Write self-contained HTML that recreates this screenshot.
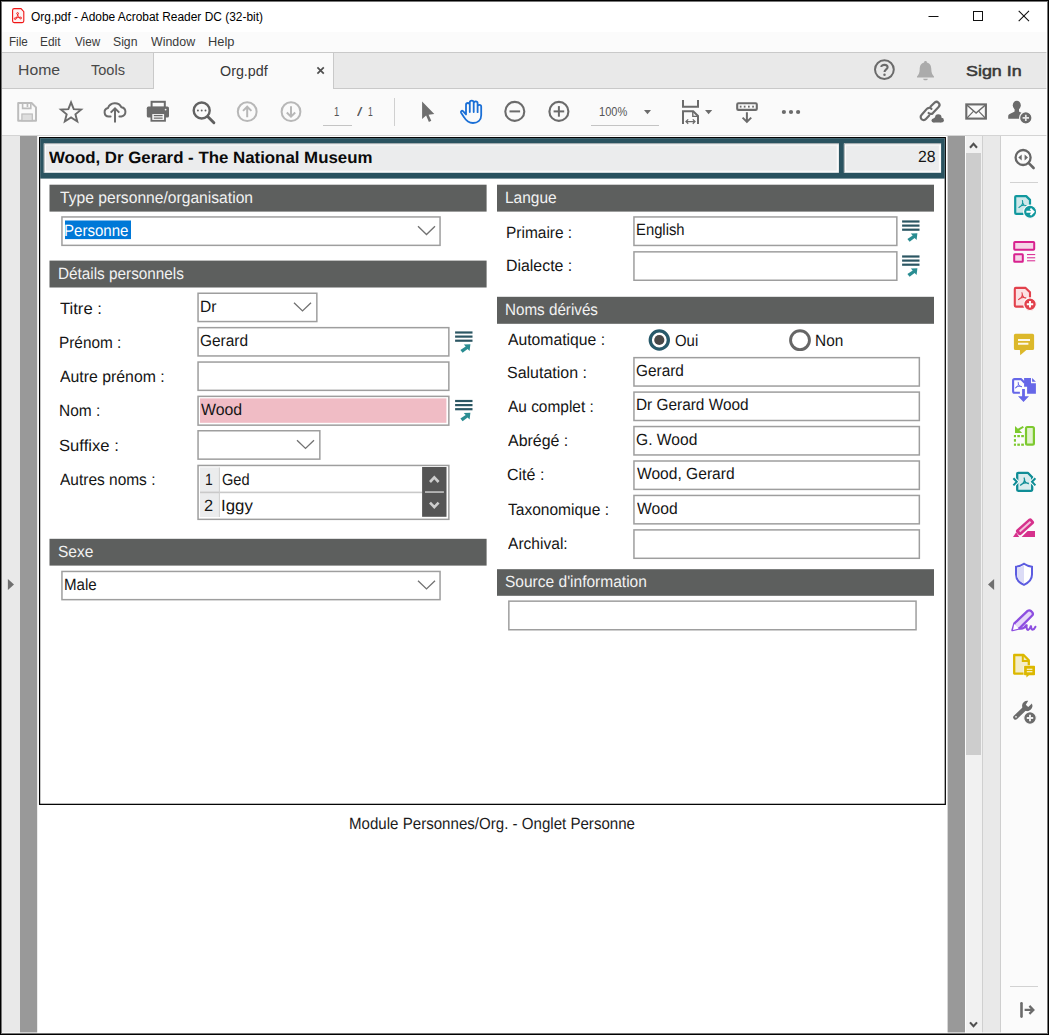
<!DOCTYPE html>
<html><head><meta charset="utf-8"><title>Org.pdf - Adobe Acrobat Reader DC (32-bit)</title>
<style>
html,body{margin:0;padding:0;background:#fff;}
body{width:1049px;height:1035px;overflow:hidden;font-family:"Liberation Sans",sans-serif;}
#win{position:relative;width:1049px;height:1035px;overflow:hidden;background:#fff;}
#win>div{position:absolute;box-sizing:border-box;}
#win>svg{position:absolute;left:0;top:0;}
.gp{text-rendering:geometricPrecision;}
.sb{-webkit-text-stroke:0.55px #3a3a3a;}
.t{position:absolute;white-space:pre;line-height:1;transform-origin:0 0;font-family:"Liberation Sans",sans-serif;}
</style></head><body><div id="win">
<div style="left:0px;top:0px;width:1049px;height:1035px;background:#000"></div>
<div style="left:1px;top:1px;width:1047px;height:1033px;background:#767676"></div>
<div style="left:2px;top:2px;width:1045px;height:1031px;background:#fff"></div>
<div style="left:2px;top:2px;width:1045px;height:30px;background:#fff"></div>
<div style="left:2px;top:32px;width:1045px;height:20px;background:#fbfbfb"></div>
<div style="left:2px;top:52px;width:1045px;height:37px;background:#e9e9e9;border-top:1px solid #c9c9c9;border-bottom:1px solid #c9c9c9"></div>
<div style="left:153px;top:53px;width:181px;height:36px;background:#fafafa;border-left:1px solid #c9c9c9;border-right:1px solid #c9c9c9"></div>
<div style="left:2px;top:89px;width:1045px;height:46px;background:#fafafa"></div>
<div style="left:2px;top:135px;width:1045px;height:1px;background:#d4d4d4"></div>
<div style="left:2px;top:136px;width:1045px;height:897px;background:#999"></div>
<div style="left:2px;top:136px;width:18px;height:897px;background:#e9e9e9"></div>
<div style="left:965px;top:136px;width:17px;height:897px;background:#f1f1f1"></div>
<div style="left:965px;top:136px;width:1px;height:897px;background:#fcfcfc"></div>
<div style="left:966px;top:153px;width:15px;height:602px;background:#cdcdcd"></div>
<div style="left:982px;top:136px;width:1px;height:897px;background:#d0d0d0"></div>
<div style="left:983px;top:136px;width:17px;height:897px;background:#e9e9e9"></div>
<div style="left:1000px;top:136px;width:1px;height:897px;background:#cfcfcf"></div>
<div style="left:1001px;top:136px;width:46px;height:897px;background:#fbfbfb"></div>
<div style="left:1010px;top:182px;width:28px;height:1px;background:#d2d2d2"></div>
<div style="left:1010px;top:986px;width:28px;height:1px;background:#d2d2d2"></div>
<div style="left:394px;top:98px;width:1px;height:28px;background:#d0d0d0"></div>
<div style="left:323px;top:125px;width:29px;height:1px;background:#c4c4c4"></div>
<div style="left:591px;top:125px;width:68px;height:1px;background:#c4c4c4"></div>
<svg width="1049" height="1035" viewBox="0 0 1049 1035"><rect x="37.2" y="136" width="910.4" height="897" fill="#fff"/><rect x="39.6" y="137.65" width="905.7" height="666.7" fill="#fff" stroke="#000" stroke-width="1.25"/><rect x="40.2" y="138.2" width="904.5" height="40.4" fill="#2a5360"/><rect x="44.9" y="144.4" width="792.9" height="27.3" fill="#ebeced" stroke="#fbfbfb" stroke-width="2.2"/><rect x="845" y="144.4" width="95" height="27.3" fill="#ebeced" stroke="#fbfbfb" stroke-width="2.2"/><path d="M44.2 172.8 V143.7 H838.9 M844.3 172.8 V143.7 H941.1" fill="none" stroke="#9aa3a5" stroke-width="0.9"/><rect x="49.5" y="184.7" width="437.10" height="26.90" fill="#5d5f5e"/><rect x="49.5" y="260.6" width="437.10" height="26.90" fill="#5d5f5e"/><rect x="49.5" y="538.8" width="437.10" height="26.80" fill="#5d5f5e"/><rect x="497" y="184.7" width="437.00" height="26.90" fill="#5d5f5e"/><rect x="497" y="296.8" width="437.00" height="27.00" fill="#5d5f5e"/><rect x="497" y="569.2" width="437.00" height="26.60" fill="#5d5f5e"/><rect x="61.95" y="216.95" width="378.10" height="28.40" fill="#fff" stroke="#9e9e9e" stroke-width="1.5"/><rect x="65" y="220.5" width="66" height="18.6" fill="#0078d7"/><path d="M418.0 226.3 L426.5 234.5 L435.0 226.3" fill="none" stroke="#727272" stroke-width="1.35"/><rect x="198.05" y="293.25" width="118.80" height="28.30" fill="#fff" stroke="#9e9e9e" stroke-width="1.5"/><path d="M294.0 302.7 L302.5 310.9 L311.0 302.7" fill="none" stroke="#727272" stroke-width="1.35"/><rect x="198.05" y="327.65" width="250.80" height="28.30" fill="#fff" stroke="#9e9e9e" stroke-width="1.5"/><rect x="198.05" y="362.05" width="250.80" height="28.30" fill="#fff" stroke="#9e9e9e" stroke-width="1.5"/><rect x="198.05" y="396.35" width="250.80" height="28.80" fill="#fff" stroke="#9e9e9e" stroke-width="1.5"/><rect x="200" y="398.4" width="246.4" height="24.4" fill="#f0bcc5"/><rect x="198.05" y="430.75" width="121.80" height="28.40" fill="#fff" stroke="#9e9e9e" stroke-width="1.5"/><path d="M297.0 440.2 L305.5 448.4 L314.0 440.2" fill="none" stroke="#727272" stroke-width="1.35"/><rect x="198.05" y="465.45" width="250.80" height="53.90" fill="#fff" stroke="#9e9e9e" stroke-width="1.5"/><rect x="200" y="467.4" width="19" height="49.6" fill="#ebeced"/><rect x="200" y="491.6" width="222.2" height="1.6" fill="#c9c9c9"/><rect x="218.9" y="467.4" width="1" height="49.6" fill="#cfcfcf"/><rect x="422.1" y="467" width="24.4" height="49.8" fill="#555"/><rect x="425" y="491.2" width="18.9" height="1.7" fill="#bdbdbd"/><path d="M430 482 L434.3 477.4 L438.6 482" fill="none" stroke="#cdcdcd" stroke-width="2.6"/><path d="M430 502.6 L434.3 507.2 L438.6 502.6" fill="none" stroke="#cdcdcd" stroke-width="2.6"/><rect x="61.95" y="571.45" width="378.10" height="28.20" fill="#fff" stroke="#9e9e9e" stroke-width="1.5"/><path d="M418.0 580.7 L426.5 588.9 L435.0 580.7" fill="none" stroke="#727272" stroke-width="1.35"/><g fill="#2b5663"><rect x="455.1" y="331.40" width="17.4" height="2.2"/><rect x="455.1" y="335.50" width="17.4" height="2.2"/><rect x="455.1" y="339.60" width="17.4" height="2.2"/></g><path d="M470.4 344.2 l-6.6 0.4 l1.9 2 l-5.3 3.3 l2.2 2.9 l5 -3.8 l2 2.1z" fill="#2a8d92"/><g fill="#2b5663"><rect x="455.1" y="399.90" width="17.4" height="2.2"/><rect x="455.1" y="404.00" width="17.4" height="2.2"/><rect x="455.1" y="408.10" width="17.4" height="2.2"/></g><path d="M470.4 412.7 l-6.6 0.4 l1.9 2 l-5.3 3.3 l2.2 2.9 l5 -3.8 l2 2.1z" fill="#2a8d92"/><rect x="633.95" y="216.95" width="262.90" height="28.50" fill="#fff" stroke="#9e9e9e" stroke-width="1.5"/><rect x="633.95" y="251.85" width="262.90" height="28.40" fill="#fff" stroke="#9e9e9e" stroke-width="1.5"/><g fill="#2b5663"><rect x="902.1" y="220.40" width="17.4" height="2.2"/><rect x="902.1" y="224.50" width="17.4" height="2.2"/><rect x="902.1" y="228.60" width="17.4" height="2.2"/></g><path d="M917.4 233.2 l-6.6 0.4 l1.9 2 l-5.3 3.3 l2.2 2.9 l5 -3.8 l2 2.1z" fill="#2a8d92"/><g fill="#2b5663"><rect x="902.1" y="255.40" width="17.4" height="2.2"/><rect x="902.1" y="259.50" width="17.4" height="2.2"/><rect x="902.1" y="263.60" width="17.4" height="2.2"/></g><path d="M917.4 268.2 l-6.6 0.4 l1.9 2 l-5.3 3.3 l2.2 2.9 l5 -3.8 l2 2.1z" fill="#2a8d92"/><rect x="633.95" y="357.65" width="285.40" height="28.40" fill="#fff" stroke="#9e9e9e" stroke-width="1.5"/><rect x="633.95" y="392.10" width="285.40" height="28.40" fill="#fff" stroke="#9e9e9e" stroke-width="1.5"/><rect x="633.95" y="426.55" width="285.40" height="28.40" fill="#fff" stroke="#9e9e9e" stroke-width="1.5"/><rect x="633.95" y="461.00" width="285.40" height="28.40" fill="#fff" stroke="#9e9e9e" stroke-width="1.5"/><rect x="633.95" y="495.45" width="285.40" height="28.40" fill="#fff" stroke="#9e9e9e" stroke-width="1.5"/><rect x="633.95" y="529.90" width="285.40" height="28.40" fill="#fff" stroke="#9e9e9e" stroke-width="1.5"/><rect x="508.85" y="601.15" width="407.20" height="28.60" fill="#fff" stroke="#9e9e9e" stroke-width="1.5"/><circle cx="659.3" cy="340" r="9.05" fill="#fff" stroke="#27596a" stroke-width="3.3"/><circle cx="659.3" cy="340" r="5.1" fill="#484848"/><circle cx="800" cy="340.2" r="9.45" fill="#fff" stroke="#666" stroke-width="2.9"/></svg>
<span class="t " style="left:30.79px;top:11.00px;font-size:12.3px;color:#000;font-weight:400;transform:scaleX(0.9696)">Org.pdf - Adobe Acrobat Reader DC (32-bit)</span>
<span class="t " style="left:8.55px;top:36.00px;font-size:12.3px;color:#3a3a3a;font-weight:400;transform:scaleX(0.9477)">File</span>
<span class="t " style="left:40.04px;top:36.00px;font-size:12.3px;color:#3a3a3a;font-weight:400;transform:scaleX(0.9639)">Edit</span>
<span class="t " style="left:74.87px;top:36.00px;font-size:12.3px;color:#3a3a3a;font-weight:400;transform:scaleX(0.9488)">View</span>
<span class="t " style="left:113.23px;top:36.00px;font-size:12.3px;color:#3a3a3a;font-weight:400;transform:scaleX(0.9924)">Sign</span>
<span class="t " style="left:150.89px;top:36.00px;font-size:12.3px;color:#3a3a3a;font-weight:400;transform:scaleX(1.0079)">Window</span>
<span class="t " style="left:207.96px;top:36.00px;font-size:12.3px;color:#3a3a3a;font-weight:400;transform:scaleX(1.0425)">Help</span>
<span class="t " style="left:17.63px;top:62.00px;font-size:15.4px;color:#484848;font-weight:400;transform:scaleX(1.0247)">Home</span>
<span class="t " style="left:90.69px;top:62.00px;font-size:15.4px;color:#484848;font-weight:400;transform:scaleX(0.9450)">Tools</span>
<span class="t " style="left:219.86px;top:64.00px;font-size:14.2px;color:#383838;font-weight:400;transform:scaleX(1.0088)">Org.pdf</span>
<span class="t sb" style="left:965.91px;top:63.00px;font-size:15.2px;color:#3a3a3a;font-weight:400;transform:scaleX(1.1784)">Sign In</span>
<span class="t " style="left:334.11px;top:106.00px;font-size:12px;color:#555;font-weight:400;transform:scaleX(0.7902)">1</span>
<span class="t " style="left:356.51px;top:106.00px;font-size:12px;color:#555;font-weight:400;transform:scaleX(1.6159)">/</span>
<span class="t " style="left:368.29px;top:106.00px;font-size:12px;color:#555;font-weight:400;transform:scaleX(0.7150)">1</span>
<span class="t " style="left:598.88px;top:106.00px;font-size:12px;color:#555;font-weight:400;transform:scaleX(0.9184)">100%</span>
<span class="t gp" style="left:48.61px;top:150.00px;font-size:16.4px;color:#0a0a0a;font-weight:700;transform:scaleX(1.0274)">Wood, Dr Gerard - The National Museum</span>
<span class="t gp" style="left:917.51px;top:149.00px;font-size:16.2px;color:#151515;font-weight:400;transform:scaleX(0.9728)">28</span>
<span class="t gp" style="left:59.76px;top:190.00px;font-size:16.2px;color:#f2f2f2;font-weight:400;transform:scaleX(0.9662)">Type personne/organisation</span>
<span class="t gp" style="left:57.65px;top:266.00px;font-size:16.2px;color:#f2f2f2;font-weight:400;transform:scaleX(0.9451)">Détails personnels</span>
<span class="t gp" style="left:58.04px;top:544.00px;font-size:16.2px;color:#f2f2f2;font-weight:400;transform:scaleX(0.9588)">Sexe</span>
<span class="t gp" style="left:505.14px;top:190.00px;font-size:16.2px;color:#f2f2f2;font-weight:400;transform:scaleX(0.9570)">Langue</span>
<span class="t gp" style="left:505.16px;top:302.00px;font-size:16.2px;color:#f2f2f2;font-weight:400;transform:scaleX(0.9392)">Noms dérivés</span>
<span class="t gp" style="left:505.34px;top:574.00px;font-size:16.2px;color:#f2f2f2;font-weight:400;transform:scaleX(0.9589)">Source d&#x27;information</span>
<span class="t gp" style="left:64.37px;top:223.00px;font-size:16.2px;color:#fff;font-weight:400;transform:scaleX(0.9298)">Personne</span>
<span class="t gp" style="left:60.25px;top:301.00px;font-size:16.2px;color:#151515;font-weight:400;transform:scaleX(1.0275)">Titre :</span>
<span class="t gp" style="left:59.35px;top:335.00px;font-size:16.2px;color:#151515;font-weight:400;transform:scaleX(0.9486)">Prénom :</span>
<span class="t gp" style="left:60.37px;top:369.00px;font-size:16.2px;color:#151515;font-weight:400;transform:scaleX(0.9778)">Autre prénom :</span>
<span class="t gp" style="left:59.34px;top:403.00px;font-size:16.2px;color:#151515;font-weight:400;transform:scaleX(0.9562)">Nom :</span>
<span class="t gp" style="left:59.47px;top:438.00px;font-size:16.2px;color:#151515;font-weight:400;transform:scaleX(1.0268)">Suffixe :</span>
<span class="t gp" style="left:60.38px;top:472.00px;font-size:16.2px;color:#151515;font-weight:400;transform:scaleX(0.9559)">Autres noms :</span>
<span class="t gp" style="left:199.93px;top:299.00px;font-size:16.2px;color:#151515;font-weight:400;transform:scaleX(0.9628)">Dr</span>
<span class="t gp" style="left:200.30px;top:333.00px;font-size:16.2px;color:#151515;font-weight:400;transform:scaleX(0.9549)">Gerard</span>
<span class="t gp" style="left:200.82px;top:402.00px;font-size:16.2px;color:#151515;font-weight:400;transform:scaleX(0.9799)">Wood</span>
<span class="t gp" style="left:204.75px;top:472.00px;font-size:16.2px;color:#151515;font-weight:400;transform:scaleX(0.8607)">1</span>
<span class="t gp" style="left:222.24px;top:472.00px;font-size:16.2px;color:#151515;font-weight:400;transform:scaleX(0.9030)">Ged</span>
<span class="t gp" style="left:204.09px;top:498.00px;font-size:16.2px;color:#151515;font-weight:400;transform:scaleX(1.0123)">2</span>
<span class="t gp" style="left:221.45px;top:498.00px;font-size:16.2px;color:#151515;font-weight:400;transform:scaleX(1.0388)">Iggy</span>
<span class="t gp" style="left:63.57px;top:577.00px;font-size:16.2px;color:#151515;font-weight:400;transform:scaleX(0.9325)">Male</span>
<span class="t gp" style="left:506.34px;top:225.00px;font-size:16.2px;color:#151515;font-weight:400;transform:scaleX(0.9553)">Primaire :</span>
<span class="t gp" style="left:506.31px;top:258.00px;font-size:16.2px;color:#151515;font-weight:400;transform:scaleX(0.9814)">Dialecte :</span>
<span class="t gp" style="left:635.69px;top:222.00px;font-size:16.2px;color:#151515;font-weight:400;transform:scaleX(0.9156)">English</span>
<span class="t gp" style="left:507.87px;top:332.00px;font-size:16.2px;color:#151515;font-weight:400;transform:scaleX(0.9712)">Automatique :</span>
<span class="t gp" style="left:507.01px;top:365.00px;font-size:16.2px;color:#151515;font-weight:400;transform:scaleX(0.9876)">Salutation :</span>
<span class="t gp" style="left:507.88px;top:399.00px;font-size:16.2px;color:#151515;font-weight:400;transform:scaleX(0.9532)">Au complet :</span>
<span class="t gp" style="left:507.87px;top:433.00px;font-size:16.2px;color:#151515;font-weight:400;transform:scaleX(0.9855)">Abrégé :</span>
<span class="t gp" style="left:507.26px;top:467.00px;font-size:16.2px;color:#151515;font-weight:400;transform:scaleX(0.9882)">Cité :</span>
<span class="t gp" style="left:507.77px;top:502.00px;font-size:16.2px;color:#151515;font-weight:400;transform:scaleX(0.9590)">Taxonomique :</span>
<span class="t gp" style="left:507.88px;top:536.00px;font-size:16.2px;color:#151515;font-weight:400;transform:scaleX(0.9613)">Archival:</span>
<span class="t gp" style="left:675.35px;top:333.00px;font-size:16.2px;color:#151515;font-weight:400;transform:scaleX(0.9229)">Oui</span>
<span class="t gp" style="left:814.84px;top:333.00px;font-size:16.2px;color:#151515;font-weight:400;transform:scaleX(0.9517)">Non</span>
<span class="t gp" style="left:636.10px;top:363.00px;font-size:16.2px;color:#151515;font-weight:400;transform:scaleX(0.9508)">Gerard</span>
<span class="t gp" style="left:635.64px;top:397.00px;font-size:16.2px;color:#151515;font-weight:400;transform:scaleX(0.9508)">Dr Gerard Wood</span>
<span class="t gp" style="left:636.09px;top:432.00px;font-size:16.2px;color:#151515;font-weight:400;transform:scaleX(0.9644)">G. Wood</span>
<span class="t gp" style="left:636.63px;top:466.00px;font-size:16.2px;color:#151515;font-weight:400;transform:scaleX(0.9631)">Wood, Gerard</span>
<span class="t gp" style="left:636.63px;top:501.00px;font-size:16.2px;color:#151515;font-weight:400;transform:scaleX(0.9677)">Wood</span>
<span class="t gp" style="left:349.17px;top:816.00px;font-size:16.2px;color:#1c1c1c;font-weight:400;transform:scaleX(0.9321)">Module Personnes/Org. - Onglet Personne</span>
<svg width="1049" height="1035" viewBox="0 0 1049 1035"><path d="M14.2 8.6 H21 L23.8 11.6 V21 Q23.8 22.6 22.2 22.6 H14.2 Q12.6 22.6 12.6 21 V10.2 Q12.6 8.6 14.2 8.6Z" fill="#fdf3f3" stroke="#f01414" stroke-width="1.1"/><g fill="none" stroke="#f01414" stroke-width="0.9"><circle cx="17.6" cy="13.5" r="0.9"/><circle cx="15.2" cy="18.6" r="0.9"/><circle cx="20.6" cy="18" r="0.9"/><path d="M17.6 14.4 C17.6 16.5 16.5 17.8 15.8 18.1 M17.7 14.4 C18 16 19 17.3 19.9 17.6 M16 18.3 C17.5 17.3 18.6 17.3 19.8 17.8"/></g><path d="M928.5 16.5 H938.5" stroke="#111" stroke-width="1"/><rect x="973.5" y="11.5" width="9" height="9" fill="none" stroke="#111" stroke-width="1"/><path d="M1018.7 10.9 L1029 21.2 M1029 10.9 L1018.7 21.2" stroke="#111" stroke-width="1.1"/><path d="M317.4 67.3 L323.8 73.7 M323.8 67.3 L317.4 73.7" stroke="#4f4f4f" stroke-width="1.7"/><circle cx="884.4" cy="69.6" r="9.4" fill="none" stroke="#6b6b6b" stroke-width="2"/><path d="M881.3 66.9 C881.3 64.2 887.6 64.2 887.6 67.2 C887.6 69.3 884.5 69.4 884.5 71.9" fill="none" stroke="#6b6b6b" stroke-width="2.1"/><circle cx="884.5" cy="74.7" r="1.25" fill="#6b6b6b"/><path d="M925.5 60.9 C926.6 60.9 926.9 61.6 926.9 62.4 C930.3 63.3 931.3 66.2 931.3 69.3 C931.3 73 932.6 75 934 76.6 V77.6 H917 V76.6 C918.4 75 919.7 73 919.7 69.3 C919.7 66.2 920.7 63.3 924.1 62.4 C924.1 61.6 924.4 60.9 925.5 60.9Z" fill="#ababab"/><path d="M923.2 78.7 H927.8 C927.8 80.8 923.2 80.8 923.2 78.7Z" fill="#ababab"/><path d="M18.2 103 H31.6 L36 107.4 V120.7 H18.2Z" fill="none" stroke="#bcbcbc" stroke-width="2" stroke-linejoin="round"/><rect x="21.9" y="114" width="10.4" height="6.7" fill="#dedede" stroke="#bcbcbc" stroke-width="1.2"/><path d="M22.6 103 V108.4 H30.8 V103" fill="none" stroke="#bcbcbc" stroke-width="1.6"/><rect x="26.6" y="104" width="1.7" height="3" fill="#bcbcbc"/><polygon points="71.05,102.30 73.75,109.18 81.13,109.62 75.42,114.32 77.28,121.48 71.05,117.50 64.82,121.48 66.68,114.32 60.97,109.62 68.35,109.18" fill="none" stroke="#6b6b6b" stroke-width="1.9" stroke-linejoin="miter"/><path d="M110.6 116.5 H108.7 A4.3 4.3 0 0 1 108 108 A7.4 7.4 0 0 1 121.4 107.2 A4.7 4.7 0 0 1 121.4 116.5 H119.4" fill="none" stroke="#6b6b6b" stroke-width="2" stroke-linecap="round"/><path d="M115 122.4 V108.8 M110.7 112.6 L115 108.3 L119.3 112.6" fill="none" stroke="#6b6b6b" stroke-width="2"/><rect x="151.6" y="101.8" width="13.2" height="6" fill="#fafafa" stroke="#6b6b6b" stroke-width="2"/><rect x="146.8" y="106.6" width="22.2" height="11" rx="1.6" fill="#6b6b6b"/><rect x="151.4" y="113.2" width="13.6" height="7.6" fill="#fafafa" stroke="#6b6b6b" stroke-width="1.8"/><path d="M153.8 115.6 H162.6 M153.8 118.2 H162.6" stroke="#6b6b6b" stroke-width="1.2"/><circle cx="165.6" cy="109.6" r="0.9" fill="#f0f0f0"/><circle cx="201.7" cy="110.5" r="8" fill="none" stroke="#626262" stroke-width="2.4"/><path d="M207.9 116.7 L213.9 122.7" stroke="#5f5f5f" stroke-width="2.9" stroke-linecap="round"/><g fill="#5f5f5f"><circle cx="197.9" cy="110.5" r="0.95"/><circle cx="201.7" cy="110.5" r="0.95"/><circle cx="205.5" cy="110.5" r="0.95"/></g><circle cx="247.2" cy="111.7" r="9.4" fill="none" stroke="#b7b7b7" stroke-width="2"/><path d="M247.2 117.2 V107 M243.0 110.9 L247.2 106.7 L251.39999999999998 110.9" fill="none" stroke="#b7b7b7" stroke-width="2"/><circle cx="291" cy="111.7" r="9.4" fill="none" stroke="#b7b7b7" stroke-width="2"/><path d="M291 106.2 V116.4 M286.8 112.5 L291 116.7 L295.2 112.5" fill="none" stroke="#b7b7b7" stroke-width="2"/><path d="M422.1 101.5 V119 L426.1 115.6 L428.9 121.9 L431.3 120.8 L428.6 114.8 L434.3 114.1Z" fill="#6f6f6f"/><path d="M466 114.4 V104.9 A1.9 1.9 0 0 1 469.8 104.9 V112 V102.5 A1.95 1.95 0 0 1 473.7 102.5 V112 V103.4 A1.95 1.95 0 0 1 477.6 103.4 V112.2 V106.6 A1.8 1.8 0 0 1 481.2 106.6 V115.2 C481.2 120.6 477.3 123 473 123 C468.4 123 466 120.6 464.2 117.4 L461.1 112.7 C460.4 111.4 461.8 110.2 463 111.1 L466 114.4" fill="none" stroke="#1a6fd6" stroke-width="1.8" stroke-linejoin="round" stroke-linecap="round"/><circle cx="514.8" cy="111.4" r="9.5" fill="none" stroke="#6b6b6b" stroke-width="2.1"/><path d="M509.49999999999994 111.4 H520.0999999999999" stroke="#6b6b6b" stroke-width="2"/><circle cx="558.9" cy="111.4" r="9.5" fill="none" stroke="#6b6b6b" stroke-width="2.1"/><path d="M553.6 111.4 H564.1999999999999" stroke="#6b6b6b" stroke-width="2"/><path d="M558.9 106.1 V116.7" stroke="#6b6b6b" stroke-width="2"/><path d="M644 110 H651 L647.5 114.2Z" fill="#6b6b6b"/><path d="M705 110 H712.2 L708.6 114.2Z" fill="#6b6b6b"/><path d="M683 100 V106.8 H698 V100" fill="none" stroke="#6b6b6b" stroke-width="2"/><path d="M683 124 V111.2 H693.2 L698 116 V124" fill="none" stroke="#6b6b6b" stroke-width="2"/><path d="M692.8 111.6 V116.4 H697.6" fill="none" stroke="#6b6b6b" stroke-width="1.4"/><path d="M686 121.6 H695 M688.2 119.4 L686 121.6 L688.2 123.8 M692.8 119.4 L695 121.6 L692.8 123.8" fill="none" stroke="#6b6b6b" stroke-width="1.3"/><rect x="737.2" y="103.3" width="19.6" height="6.6" rx="1.2" fill="none" stroke="#6b6b6b" stroke-width="2.1"/><g fill="#6b6b6b"><rect x="739.8" y="105.7" width="1.7" height="1.9"/><rect x="743.8" y="105.7" width="1.7" height="1.9"/><rect x="748" y="105.7" width="1.7" height="1.9"/><rect x="752.2" y="105.7" width="1.7" height="1.9"/></g><path d="M746.9 112.2 V121.6 M742.6 117.6 L746.9 121.9 L751.2 117.6" fill="none" stroke="#6b6b6b" stroke-width="2"/><g fill="#6b6b6b"><circle cx="783.9" cy="112" r="2.1"/><circle cx="791" cy="112" r="2.1"/><circle cx="798.1" cy="112" r="2.1"/></g><g fill="none" stroke="#6b6b6b" stroke-width="2.2" stroke-linecap="round"><path d="M930.6 106.6 L934.2 102.9 A3 3 0 0 1 938.6 107.1 L932.9 113.1 A3 3 0 0 1 928.6 113"/><path d="M931.4 108.8 A3 3 0 0 0 926.8 108.9 L921.5 114.9 A3 3 0 0 0 925.9 119.1 L929.2 115.6"/></g><g fill="#fafafa" stroke="#fafafa" stroke-width="2"><circle cx="938.3" cy="117.4" r="3.2"/><circle cx="941.5" cy="120.2" r="2.4"/><circle cx="933.5" cy="120.6" r="2"/><path d="M933.5 122.6 V118.6 L936 116.4 H941 V122.6Z"/></g><g fill="#6b6b6b"><circle cx="938.3" cy="117.4" r="3.2"/><circle cx="941.5" cy="120.2" r="2.4"/><circle cx="933.5" cy="120.6" r="2"/><path d="M933.5 122.6 V118.6 L936 116.4 H941 V122.6Z"/></g><rect x="966.3" y="104.4" width="19.6" height="14.2" fill="none" stroke="#6b6b6b" stroke-width="2.1"/><path d="M966.8 105 L976.1 113 L985.4 105" fill="none" stroke="#6b6b6b" stroke-width="1.5"/><path d="M967 118 L973.6 111.2 M985.2 118 L978.6 111.2" stroke="#6b6b6b" stroke-width="1.1"/><ellipse cx="1016.8" cy="105.3" rx="4" ry="4.6" fill="#6b6b6b"/><path d="M1008.2 118.8 V116.2 C1008.2 113.6 1012.6 113.4 1014.6 111.6 V109 H1019 V111.6 C1021 113.4 1025.4 113.6 1025.4 116.2 V118.8Z" fill="#6b6b6b"/><circle cx="1025.8" cy="117.9" r="6.2" fill="#6b6b6b" stroke="#fafafa" stroke-width="1.2"/><path d="M1022.6 117.9 H1029 M1025.8 114.7 V121.1" stroke="#e6e6e6" stroke-width="1.7"/><path d="M7.9 578.9 L14 584.5 L7.9 590.1Z" fill="#6f6f6f"/><path d="M994.1 579.1 L988 584.6 L994.1 590.1Z" fill="#6f6f6f"/><path d="M970 147.8 L973.5 143.9 L977 147.8" fill="none" stroke="#505050" stroke-width="2.1"/><path d="M970 1022.4 L973.5 1026.3 L977 1022.4" fill="none" stroke="#505050" stroke-width="2.1"/><path d="M1021.5 1003.2 V1016.6" stroke="#6b6b6b" stroke-width="2.6" stroke-linecap="round"/><path d="M1024.6 1009.9 H1033 M1029.4 1005.9 L1033.4 1009.9 L1029.4 1013.9" fill="none" stroke="#6b6b6b" stroke-width="2.2"/></svg><svg width="1049" height="1035" viewBox="0 0 1049 1035"><circle cx="1023.1" cy="157.5" r="7.5" fill="none" stroke="#666" stroke-width="2.3"/><path d="M1028.8 163.2 L1033.6 168" stroke="#666" stroke-width="2.6" stroke-linecap="round"/><path d="M1021.7 154.4 V160.6 L1018.3 157.5Z M1024.6 154.4 V160.6 L1028 157.5Z" fill="#6a6a6a"/><path d="M1016.2 196.1 H1026.2 L1030 199.9 V213.9 H1016.2 Q1015.2 213.9 1015.2 212.9 V197.1 Q1015.2 196.1 1016.2 196.1Z" fill="#cfe8ea" stroke="#11989e" stroke-width="2.2" stroke-linejoin="round"/><path d="M1022.37 200.52 C1023.63 202.82 1021.91 206.04 1018.92 207.42 M1022.49 202.59 C1023.29 204.66 1024.67 205.81 1026.39 205.92 M1020.07 206.38 C1022.14 205.23 1024.21 205.00 1026.16 205.58" fill="none" stroke="#11989e" stroke-width="1.1" stroke-linecap="round"/><circle cx="1030.1" cy="211.8" r="6.6" fill="#11989e" stroke="#fbfbfb" stroke-width="1.2"/><path d="M1026.4 211.8 H1033 M1030.4 208.6 L1033.6 211.8 L1030.4 215" fill="none" stroke="#fff" stroke-width="1.9"/><rect x="1014.2" y="242" width="20" height="7.8" rx="0.8" fill="#f6d5e7" stroke="#d8228f" stroke-width="2"/><rect x="1014.2" y="254.2" width="8.6" height="7.6" rx="0.6" fill="#f6d5e7" stroke="#d8228f" stroke-width="2"/><path d="M1027 254.6 H1035.2 M1027 257.8 H1035.2 M1027 260.8 H1035.2" stroke="#d8228f" stroke-width="1"/><path d="M1015.8 287.9 H1025.6 L1030 292.3 V306.6 H1015.8 Q1014.8 306.6 1014.8 305.6 V288.9 Q1014.8 287.9 1015.8 287.9Z" fill="#fbe1e3" stroke="#e2414c" stroke-width="2.1" stroke-linejoin="round"/><path d="M1021.97 292.72 C1023.24 295.02 1021.51 298.24 1018.52 299.62 M1022.09 294.79 C1022.89 296.86 1024.27 298.01 1026.00 298.12 M1019.67 298.58 C1021.74 297.44 1023.81 297.20 1025.77 297.78" fill="none" stroke="#e2414c" stroke-width="1.1" stroke-linecap="round"/><circle cx="1030" cy="304.2" r="6.3" fill="#e2414c" stroke="#fbfbfb" stroke-width="1.2"/><path d="M1026.8 304.2 H1033.2 M1030 301 V307.4" stroke="#fff" stroke-width="1.9"/><path d="M1015.5 333.7 H1032.5 Q1034.1 333.7 1034.1 335.3 V348.4 Q1034.1 350 1032.5 350 H1026.4 L1020.2 355.3 L1019.9 350 H1015.5 Q1013.9 350 1013.9 348.4 V335.3 Q1013.9 333.7 1015.5 333.7Z" fill="#dcb82a"/><path d="M1018 340 H1030 M1018 343.8 H1028.4" stroke="#fdf8e6" stroke-width="1.9"/><path d="M1013.1 379.1 H1020.8 L1024.1 382.4 V392.8 H1013.1Z" fill="#fdfdff"/><path d="M1024.1 378.1 H1031 V383.2 H1035.9 V393.7 H1027.1 V386.8 H1024.1Z M1032.1 378.1 L1035.9 381.7 H1032.1Z" fill="#6667e8"/><path d="M1019.9 392.8 H1014.6 Q1013.1 392.8 1013.1 391.3 V380.6 Q1013.1 379.1 1014.6 379.1 H1020.9 L1024.6 382.8" fill="none" stroke="#6667e8" stroke-width="2.1"/><path d="M1018.21 382.26 C1019.25 384.16 1017.83 386.82 1015.36 387.96 M1018.30 383.97 C1018.97 385.68 1020.11 386.63 1021.53 386.73 M1016.31 387.11 C1018.02 386.16 1019.73 385.97 1021.35 386.44" fill="none" stroke="#6667e8" stroke-width="1.0" stroke-linecap="round"/><path d="M1022.1 389.1 H1024.9 V396.3 H1029 L1023.5 401.9 L1018 396.3 H1022.1Z" fill="#6667e8" stroke="#fdfdfd" stroke-width="1.7" paint-order="stroke"/><rect x="1026" y="427" width="7.9" height="17.7" rx="1.4" fill="#e3f2d0" stroke="#7dc92f" stroke-width="2.2"/><g fill="#7dc92f"><rect x="1013.9" y="435" width="2.1" height="2.2"/><rect x="1017.3" y="435" width="2.6" height="2.2"/><rect x="1021.2" y="435" width="2.7" height="2.2"/><rect x="1013.9" y="439.1" width="2.1" height="2.6"/><rect x="1013.9" y="443.6" width="2.1" height="2.2"/><rect x="1017.3" y="443.6" width="2.6" height="2.2"/><rect x="1021.2" y="443.6" width="2.7" height="2.2"/></g><path d="M1015 426 L1017.9 428.8 L1022.8 425.9 L1023.9 427.5 L1019.4 430.3 L1022.2 432.9 H1015Z" fill="#7dc92f"/><path d="M1018.2 472.8 H1027.8 L1032.2 477.2 V489.8 Q1032.2 490.8 1031.2 490.8 H1018.2 Q1017.2 490.8 1017.2 489.8 V473.8 Q1017.2 472.8 1018.2 472.8Z" fill="#d9ecee" stroke="#0f8d96" stroke-width="2.3" stroke-linejoin="round"/><path d="M1024.16 477.96 C1025.48 480.36 1023.68 483.72 1020.56 485.16 M1024.28 480.12 C1025.12 482.28 1026.56 483.48 1028.36 483.60 M1021.76 484.08 C1023.92 482.88 1026.08 482.64 1028.12 483.24" fill="none" stroke="#0f8d96" stroke-width="1.3" stroke-linecap="round"/><path d="M1013.4 478.2 L1016.8 481.8 L1013.4 485.4 M1035.4 478.2 L1032 481.8 L1035.4 485.4" fill="none" stroke="#fbfbfb" stroke-width="4"/><path d="M1013.4 478.2 L1016.8 481.8 L1013.4 485.4 M1035.4 478.2 L1032 481.8 L1035.4 485.4" fill="none" stroke="#0f8d96" stroke-width="2"/><g transform="translate(1025.3 526.5) rotate(-41.5)"><rect x="-10.6" y="-3.4" width="20.4" height="6.8" rx="2.1" fill="#d6318c"/><rect x="-7.6" y="-1" width="14.6" height="2" fill="#f3c3dd"/></g><path d="M1013 536.9 L1016.2 532.3 L1019.2 536.9Z" fill="#d6318c"/><path d="M1021.6 536.9 L1027.6 531 H1035 V536.9Z" fill="#d6318c"/><path d="M1024 563.8 C1026.4 565.5 1029 566.4 1032 566.8 V574.6 C1032 579.6 1028.6 582.8 1024 584.8 C1019.4 582.8 1016 579.6 1016 574.6 V566.8 C1019 566.4 1021.6 565.5 1024 563.8Z" fill="#fff" stroke="#5c5ce0" stroke-width="2"/><path d="M1024 565.2 C1021.8 566.6 1019.6 567.4 1017.1 567.8 V574.6 C1017.1 578.8 1020 581.6 1024 583.6Z" fill="#dcdcf6"/><path d="M1012.4 630.2 L1014.4 623.4 L1027.6 610.9 Q1029.4 609.6 1031.2 611.2 L1032.2 612.2 Q1033.6 613.9 1032.2 615.5 L1019.4 628.4 L1012.4 630.2Z" fill="#e6d8f8" stroke="#8d4ee0" stroke-width="2.3" stroke-linejoin="round"/><path d="M1014.2 624 L1019 628.6 L1013 630Z" fill="#fff"/><path d="M1019.4 628.4 C1023 629.6 1025.6 626.4 1026.8 624.6 C1026.2 627 1026.4 630.2 1028.4 629.8 C1030 629.4 1030.6 626.6 1031 625.6 C1031 627.8 1031.4 630 1033 629.6 C1034.4 629.2 1035 627.6 1035.4 626.8" fill="none" stroke="#8d4ee0" stroke-width="2.1" stroke-linecap="round"/><path d="M1014.2 655 H1023.6 L1028.8 660.2 V673.6 H1014.2Z" fill="#f3edc9" stroke="#dcb800" stroke-width="2.3" stroke-linejoin="round"/><path d="M1022.8 655.4 V661 H1028.4" fill="none" stroke="#dcb800" stroke-width="2"/><path d="M1024.9 665.8 H1034.2 Q1035 665.8 1035 666.6 V674.4 Q1035 675.2 1034.2 675.2 H1029 L1026.4 677.6 V675.2 H1024.9 Q1024.1 675.2 1024.1 674.4 V666.6 Q1024.1 665.8 1024.9 665.8Z" fill="#dcb800" stroke="#fbfbfb" stroke-width="1" paint-order="stroke"/><path d="M1026.8 669.2 H1032.4 M1026.8 671.8 H1032.4" stroke="#fff" stroke-width="1.1"/><path d="M1015.5 717.3 L1024.6 708.6" stroke="#6b6b6b" stroke-width="4.6" stroke-linecap="round"/><path d="M1031.9 703.6 A5.2 5.2 0 1 1 1028.2 700.8 L1025.8 704.8 L1028.2 707 Z" fill="#6b6b6b"/><circle cx="1016" cy="716.8" r="0.9" fill="#eee"/><circle cx="1030" cy="718" r="6.3" fill="#6b6b6b" stroke="#fbfbfb" stroke-width="1.2"/><path d="M1026.8 718 H1033.2 M1030 714.8 V721.2" stroke="#f0f0f0" stroke-width="1.9"/></svg><div style="left:1046px;top:2px;width:1px;height:1031px;background:rgba(255,255,255,.55)"></div><div style="left:2px;top:1032px;width:1045px;height:1px;background:rgba(255,255,255,.55)"></div>
</div></body></html>
